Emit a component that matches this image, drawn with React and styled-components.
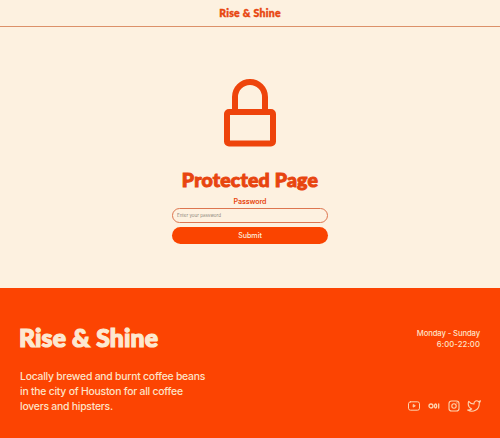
import React, { useState } from "react";
import styled, { createGlobalStyle } from "styled-components";

const GlobalStyle = createGlobalStyle`
  * {
    box-sizing: border-box;
  }

  body {
    margin: 0;
    background: #fdf1e0;
    font-family: Inter, "Liberation Sans", sans-serif;
  }

  h1, h2, p {
    margin: 0;
  }
`;

const StyledPage = styled.div`
  height: 438px;
  display: flex;
  flex-direction: column;
  overflow: hidden;
  color: #fa4400;
`;

const StyledHeader = styled.header`
  flex: none;
  height: 27px;
  display: flex;
  align-items: center;
  justify-content: center;
  border-bottom: 1px solid #dc9169;
`;

const StyledTitle = styled.h1`
  font-family: Lato, "Open Sans", sans-serif;
  font-weight: 900;
  font-size: ${(props) => props.$size}px;
  line-height: ${(props) => props.$line}px;
  letter-spacing: ${(props) => props.$spacing || 0}px;
  color: ${(props) => props.$color || "#e8450f"};
  -webkit-text-stroke: ${(props) => props.$stroke || 0}px currentColor;
  white-space: nowrap;
`;

const StyledMain = styled.main`
  flex: none;
  height: 261px;
  padding-top: 51px;
  display: flex;
  flex-direction: column;
  align-items: center;
`;

const StyledForm = styled.form`
  width: 156px;
  margin-top: 3px;
  display: flex;
  flex-direction: column;
`;

const StyledLabel = styled.label`
  margin-bottom: 2px;
  font-size: 7.1px;
  font-weight: 600;
  line-height: 9px;
  letter-spacing: -0.1px;
  text-align: center;
  color: #e8450f;
`;

const StyledInput = styled.input`
  height: 15px;
  padding: 0 4px;
  border: 1px solid #dd7650;
  border-radius: 8px;
  outline: none;
  background: transparent;
  font: 4.5px Inter, sans-serif;
  color: #e8450f;

  &::placeholder {
    color: #8f887d;
  }
`;

const StyledSubmitButton = styled.button`
  height: 17px;
  margin-top: 4px;
  padding: 0;
  border: none;
  border-radius: 9px;
  background: #fa4400;
  color: #fdeedd;
  font: 500 7.1px Inter, sans-serif;
`;

const StyledFooter = styled.footer`
  flex: 1;
  padding: 33px 20px 24px 19px;
  display: flex;
  justify-content: space-between;
  background: #fc4402;
  color: #fde3c8;
`;

const StyledAbout = styled.p`
  margin: 14px 0 0 1px;
  font-size: 10.4px;
  font-weight: 500;
  line-height: 15px;
  letter-spacing: -0.23px;
  white-space: nowrap;
`;

const StyledSide = styled.div`
  display: flex;
  flex-direction: column;
  justify-content: space-between;
  align-items: flex-end;
`;

const StyledHours = styled.p`
  padding-top: 7px;
  font-size: 7.7px;
  font-weight: 500;
  line-height: 11px;
  letter-spacing: -0.12px;
  text-align: right;
`;

const StyledTime = styled.span`
  letter-spacing: 0.1px;
`;

const StyledSocials = styled.div`
  margin: 0 -1px 1px 0;
  display: flex;
  align-items: center;
  gap: 6px;

  svg {
    display: block;
    fill: none;
    stroke: #fdd3ae;
    stroke-linecap: round;
    stroke-linejoin: round;
  }
`;

const StyledLock = styled.svg`
  display: block;
  width: 54px;
  height: 69px;
  margin-bottom: 19px;
  fill: none;
  stroke: #ee440c;
  stroke-width: 6;
`;

const LockIcon = () => (
  <StyledLock viewBox="0 0 54 69">
    <path d="M12 32V19a15 15 0 0 1 30 0V32" />
    <rect x="4" y="34" width="46" height="31.500" rx="2" />
  </StyledLock>
);

const YoutubeIcon = () => (
  <svg width="14" height="14" viewBox="0 0 14 14">
    <rect x="1.500" y="2.800" width="11" height="8.400" rx="2" />
    <path d="M6.200 5.900v2.200L8 7z" fill="#fdd3ae" />
  </svg>
);

const MediumIcon = () => (
  <svg width="14" height="14" viewBox="0 0 14 14" strokeWidth="1.300">
    <circle cx="4" cy="7" r="2" />
    <ellipse cx="8.600" cy="7" rx="1.100" ry="2" />
    <path d="M11.700 5v4" />
  </svg>
);

const InstagramIcon = () => (
  <svg width="14" height="14" viewBox="0 0 14 14" strokeWidth="1.100">
    <rect x="2" y="2" width="10" height="10" rx="2.600" />
    <circle cx="7" cy="7" r="2.200" />
    <circle cx="9.900" cy="4.100" r=".2" />
  </svg>
);

const TwitterIcon = () => (
  <svg width="14" height="14" viewBox="0 0 24 24" strokeWidth="1.900">
    <path d="M23 3a10.900 10.900 0 0 1-3.140 1.530 4.480 4.480 0 0 0-7.860 3v1A10.660 10.660 0 0 1 3 4s-4 9 5 13a11.640 11.640 0 0 1-7 2c9 5 20 0 20-11.500 0-.28-.03-.56-.08-.83A7.720 7.720 0 0 0 23 3z" />
  </svg>
);

const App = () => {
  const [password, setPassword] = useState("");

  return (
    <StyledPage>
      <GlobalStyle />
      <StyledHeader>
        <StyledTitle as="h2" $size={10.5} $line={14} $stroke={0.4} $spacing={0.28}>
          Rise &amp; Shine
        </StyledTitle>
      </StyledHeader>
      <StyledMain>
        <LockIcon />
        <StyledTitle $size={19.5} $line={28} $stroke={1} $spacing={0.2}>
          Protected Page
        </StyledTitle>
        <StyledForm onSubmit={(e) => e.preventDefault()}>
          <StyledLabel htmlFor="password">Password</StyledLabel>
          <StyledInput
            id="password"
            type="password"
            placeholder="Enter your password"
            value={password}
            onChange={(e) => setPassword(e.target.value)}
          />
          <StyledSubmitButton type="submit">Submit</StyledSubmitButton>
        </StyledForm>
      </StyledMain>
      <StyledFooter>
        <div>
          <StyledTitle as="h2" $size={24.8} $line={34} $stroke={1.2} $spacing={0.1} $color="#fde8d0">
            Rise &amp; Shine
          </StyledTitle>
          <StyledAbout>
            Locally brewed and burnt coffee beans
            <br />
            in the city of Houston for all coffee
            <br />
            lovers and hipsters.
          </StyledAbout>
        </div>
        <StyledSide>
          <StyledHours>
            Monday - Sunday
            <br />
            <StyledTime>6:00-22:00</StyledTime>
          </StyledHours>
          <StyledSocials>
            <YoutubeIcon />
            <MediumIcon />
            <InstagramIcon />
            <TwitterIcon />
          </StyledSocials>
        </StyledSide>
      </StyledFooter>
    </StyledPage>
  );
};

export default App;
